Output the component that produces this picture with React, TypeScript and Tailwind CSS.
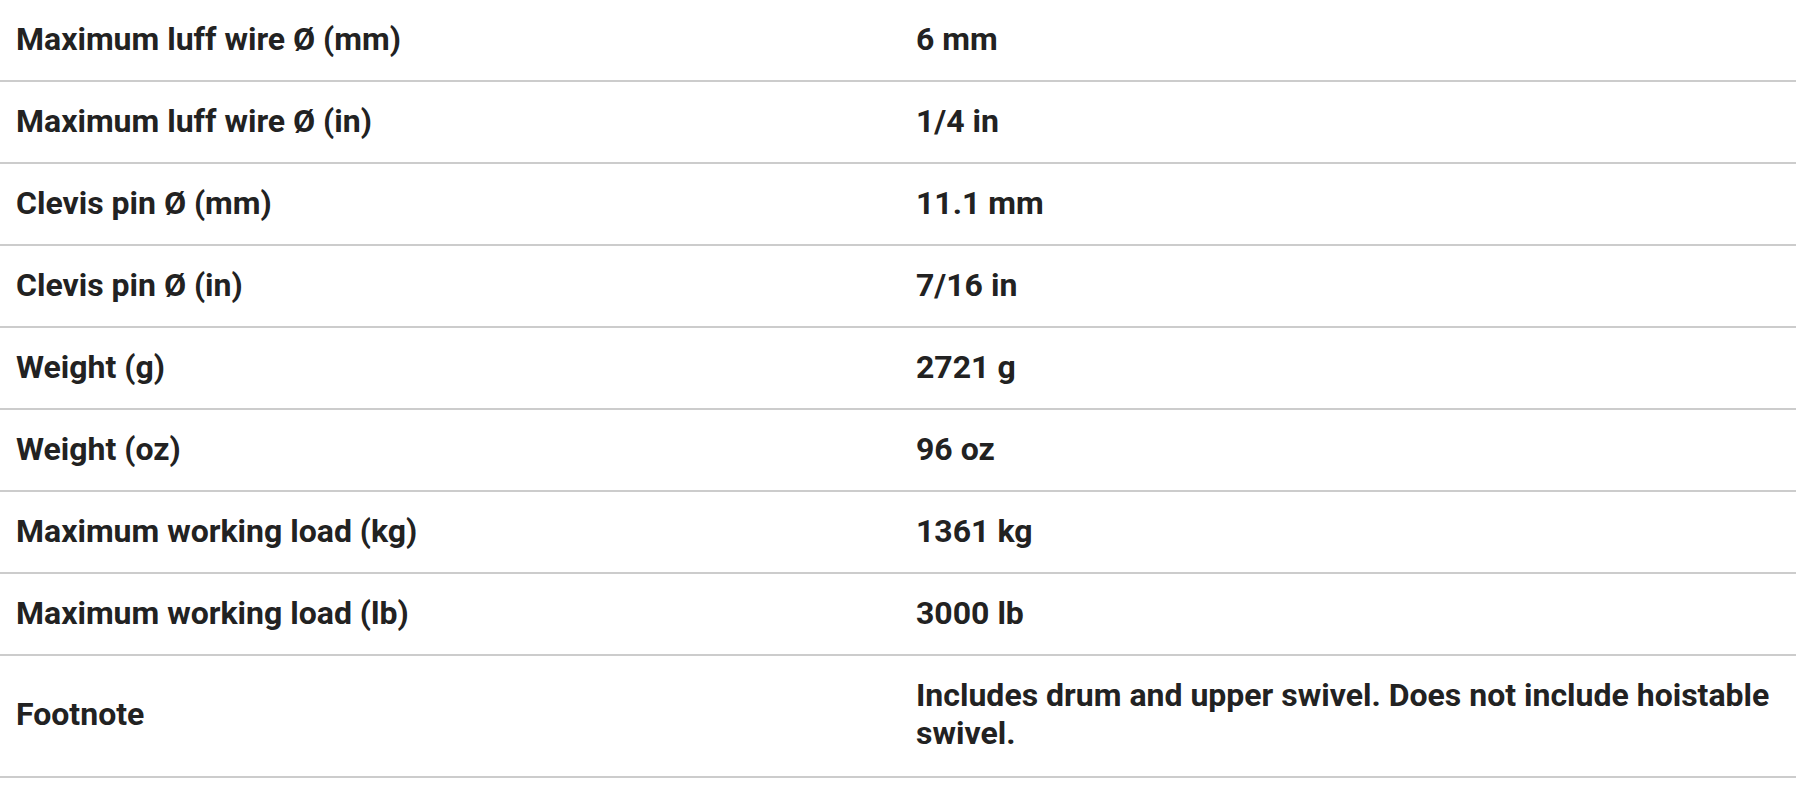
import React from 'react';

const specs: { label: string; value: string }[] = [
  { label: 'Maximum luff wire Ø (mm)', value: '6 mm' },
  { label: 'Maximum luff wire Ø (in)', value: '1/4 in' },
  { label: 'Clevis pin Ø (mm)', value: '11.1 mm' },
  { label: 'Clevis pin Ø (in)', value: '7/16 in' },
  { label: 'Weight (g)', value: '2721 g' },
  { label: 'Weight (oz)', value: '96 oz' },
  { label: 'Maximum working load (kg)', value: '1361 kg' },
  { label: 'Maximum working load (lb)', value: '3000 lb' },
  { label: 'Footnote', value: 'Includes drum and upper swivel. Does not include hoistable swivel.' },
];

const App: React.FC = () => {
  return (
    <div className="min-h-screen bg-white">
      <div className="w-[1796px] font-['Roboto',sans-serif] text-[32px] leading-[38px] font-bold text-[#222]">
        {specs.map((spec, idx) => {
          // the footnote wraps onto two lines and sits a bit taller
          const pad = idx === specs.length - 1 ? 'pt-5 pb-6' : 'pt-5 pb-[22px]';
          return (
            <div key={spec.label} className="grid grid-cols-[900px_1fr] items-center border-b-2 border-[#cccccc]">
              <div className={`px-4 ${pad}`}>{spec.label}</div>
              <div className={`px-4 ${pad}`}>{spec.value}</div>
            </div>
          );
        })}
      </div>
    </div>
  );
};

export default App;
